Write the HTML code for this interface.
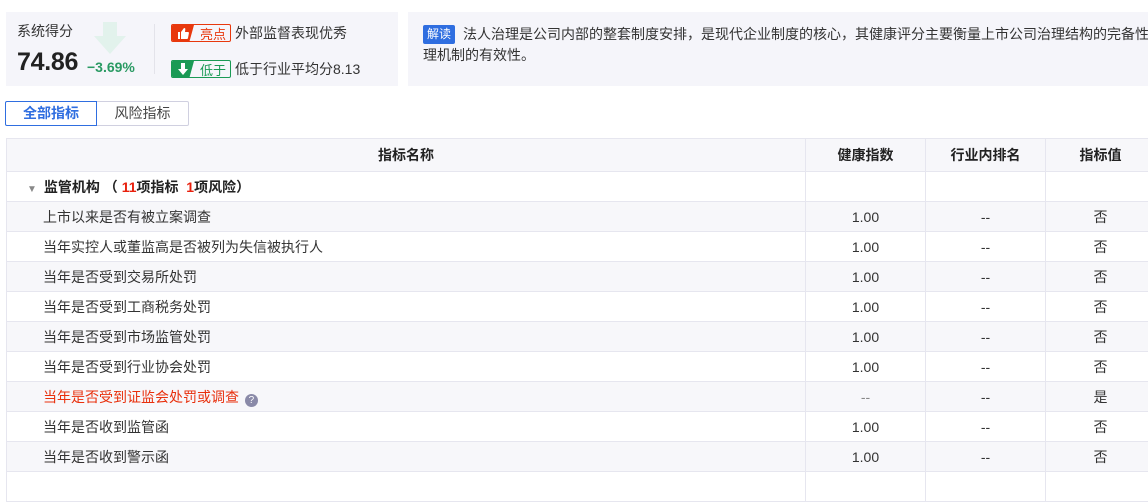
<!DOCTYPE html>
<html><head><meta charset="utf-8"><style>
*{margin:0;padding:0;box-sizing:border-box}
body{width:1148px;height:475px;overflow:hidden;background:#fff;font-family:"Liberation Sans","Noto Sans CJK SC",sans-serif;color:#333;font-size:14px;position:relative}
.abs{position:absolute}
.box{background:#f5f5fa}
.tag{position:absolute;height:18px;border:1px solid;display:flex;align-items:center;font-size:13px;border-radius:2px;overflow:hidden}
.tag .ic{height:100%;width:22px;display:flex;align-items:center;justify-content:center;color:#fff;clip-path:polygon(0 0,100% 0,80% 100%,0 100%)}
table{position:absolute;left:6px;top:138px;border-collapse:collapse;width:1150px}
td,th{height:30px;border:1px solid #e6e6ef;font-size:14px;font-weight:normal;text-align:center}
th{height:33px;background:#f7f7fa;font-weight:bold;color:#222}
td.n{text-align:left;padding-left:36px}
tr.g td{background:#f7f7fa}
</style></head><body>
<div class="abs box" style="left:6px;top:12px;width:392px;height:74px"></div>
<div class="abs" style="left:17px;top:21px;font-size:14px;color:#333">系统得分</div>
<svg class="abs" style="left:93px;top:22px" width="34" height="32"><path d="M10 0h14v14h9L17 32 1 14h9z" fill="#e2f2ec"/></svg>
<div class="abs" style="left:17px;top:48px;font-size:25px;font-weight:bold;color:#222;letter-spacing:-0.3px">74.86</div>
<div class="abs" style="left:87px;top:59px;font-size:14px;color:#2a9a63;font-weight:bold">−3.69%</div>
<div class="abs" style="left:154px;top:24px;width:1px;height:50px;background:#e3e3ea"></div>
<div class="tag" style="left:171px;top:24px;width:60px;border-color:#e8380d"><div class="ic" style="background:#e8380d"><svg width="11" height="11" viewBox="0 0 11 11"><path d="M0 4h2v7H0zM3 4l3-4c1 0 1.5.5 1.3 1.5L7 4h3c.8 0 1 .6.9 1.2L10 10c-.1.6-.5 1-1 1H3z" fill="#fff"/></svg></div><span style="color:#e8380d;margin-left:6px">亮点</span></div>
<div class="abs" style="left:235px;top:23px;font-size:14px">外部监督表现优秀</div>
<div class="tag" style="left:171px;top:60px;width:60px;border-color:#1a9a55"><div class="ic" style="background:#1a9a55"><svg width="10" height="12" viewBox="0 0 10 12"><path d="M3 0h4v6h3l-5 6-5-6h3z" fill="#fff"/></svg></div><span style="color:#1a9a55;margin-left:6px">低于</span></div>
<div class="abs" style="left:235px;top:59px;font-size:14px">低于行业平均分8.13</div>

<div class="abs box" style="left:408px;top:12px;width:740px;height:74px;overflow:hidden"></div>
<div class="abs" style="left:423px;top:25px;width:32px;height:19px;background:#2f6ee0;color:#fff;font-size:12px;text-align:center;line-height:19px;border-radius:2px">解读</div>
<div class="abs" style="left:463px;top:23px;font-size:14px;line-height:22px;color:#333;white-space:nowrap">法人治理是公司内部的整套制度安排，是现代企业制度的核心，其健康评分主要衡量上市公司治理结构的完备性</div>
<div class="abs" style="left:423px;top:44px;font-size:14px;line-height:22px;color:#333">理机制的有效性。</div>

<div class="abs" style="left:5px;top:101px;width:92px;height:25px;border:1px solid #2f6ee0;color:#2f6ee0;font-weight:bold;text-align:center;line-height:23px;border-radius:2px 0 0 2px">全部指标</div>
<div class="abs" style="left:97px;top:101px;width:92px;height:25px;border:1px solid #d0d0e0;border-left:none;color:#444;text-align:center;line-height:23px;border-radius:0 2px 2px 0">风险指标</div>

<table>
<tr><th style="width:799px">指标名称</th><th style="width:120px">健康指数</th><th style="width:120px">行业内排名</th><th>指标值</th></tr>
<tr><td class="n" style="padding-left:20px;font-weight:bold;color:#222"><span style="color:#888;font-size:10px;margin-right:7px">▼</span>监管机构 （ <span style="color:#e8200d">11</span>项指标 &nbsp;<span style="color:#e8200d">1</span>项风险）</td><td></td><td></td><td></td></tr>
<tr class="g"><td class="n">上市以来是否有被立案调查</td><td>1.00</td><td>--</td><td>否</td></tr>
<tr><td class="n">当年实控人或董监高是否被列为失信被执行人</td><td>1.00</td><td>--</td><td>否</td></tr>
<tr class="g"><td class="n">当年是否受到交易所处罚</td><td>1.00</td><td>--</td><td>否</td></tr>
<tr><td class="n">当年是否受到工商税务处罚</td><td>1.00</td><td>--</td><td>否</td></tr>
<tr class="g"><td class="n">当年是否受到市场监管处罚</td><td>1.00</td><td>--</td><td>否</td></tr>
<tr><td class="n">当年是否受到行业协会处罚</td><td>1.00</td><td>--</td><td>否</td></tr>
<tr class="g"><td class="n" style="color:#e8300d">当年是否受到证监会处罚或调查 <span style="display:inline-block;width:13px;height:13px;border-radius:50%;background:#8a8aa8;color:#fff;font-size:10px;text-align:center;line-height:13px;vertical-align:-1px;margin-left:2px">?</span></td><td style="color:#888">--</td><td>--</td><td>是</td></tr>
<tr><td class="n">当年是否收到监管函</td><td>1.00</td><td>--</td><td>否</td></tr>
<tr class="g"><td class="n">当年是否收到警示函</td><td>1.00</td><td>--</td><td>否</td></tr>
<tr><td class="n"></td><td></td><td></td><td></td></tr>
</table>
</body></html>
